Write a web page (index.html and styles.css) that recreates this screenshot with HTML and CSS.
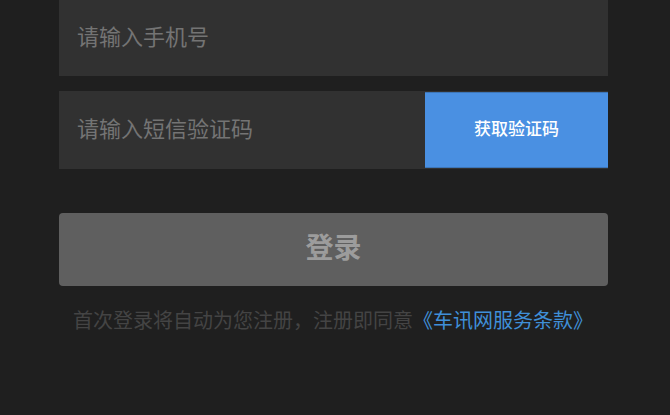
FILE: index.html
```html
<!DOCTYPE html>
<html lang="zh-CN">
<head>
<meta charset="utf-8">
<title>登录</title>
<link rel="stylesheet" href="styles.css">
</head>
<body>
<main class="login">
  <div class="field field-phone">
    <input class="field-input" type="tel" placeholder="请输入手机号">
  </div>
  <div class="field field-code">
    <input class="field-input" type="text" placeholder="请输入短信验证码">
    <button class="code-btn" type="button">获取验证码</button>
  </div>
  <button class="submit-btn" type="button">登录</button>
  <p class="agreement">首次登录将自动为您注册，注册即同意<a class="agreement-link" href="#">《车讯网服务条款》</a></p>
</main>
</body>
</html>
```
FILE: styles.css
```css
html, body {
  margin: 0;
  padding: 0;
  background: #1f1f1f;
  height: 100%;
}
body {
  font-family: "Noto Sans CJK SC", "Noto Sans", sans-serif;
  overflow: hidden;
}
.login {
  display: flex;
  flex-direction: column;
  margin: -1px 62px 0 59px;
}
.field {
  display: flex;
  align-items: stretch;
  background: #313131;
}
.field-phone {
  height: 77px;
}
.field-code {
  height: 78px;
  margin-top: 15px;
}
.field-input {
  flex: 1;
  min-width: 0;
  border: 0;
  outline: 0;
  background: transparent;
  padding: 0 0 6px 18px;
  font-family: inherit;
  font-size: 22px;
  color: #dddddd;
}
.field-input::placeholder {
  color: #747474;
}
.code-btn {
  width: 183px;
  margin: 1px 0;
  border: 0;
  border-top: 1px solid #3d76b8;
  border-bottom: 1px solid #3d76b8;
  background: #4a90e2;
  color: #ffffff;
  font-family: inherit;
  font-size: 17px;
  font-weight: 500;
  padding: 0 0 6px;
}
.submit-btn {
  margin-top: 44px;
  height: 73px;
  border: 0;
  border-radius: 4px;
  background: #5f5f5f;
  color: #9c9c9c;
  font-family: inherit;
  font-size: 28px;
  font-weight: 700;
  padding: 0 0 7px;
}
.agreement {
  margin: 18px 0 0;
  padding-left: 14px;
  font-size: 20px;
  line-height: 32px;
  color: #444444;
}
.agreement-link {
  color: #3f8fd8;
  text-decoration: none;
}
```
